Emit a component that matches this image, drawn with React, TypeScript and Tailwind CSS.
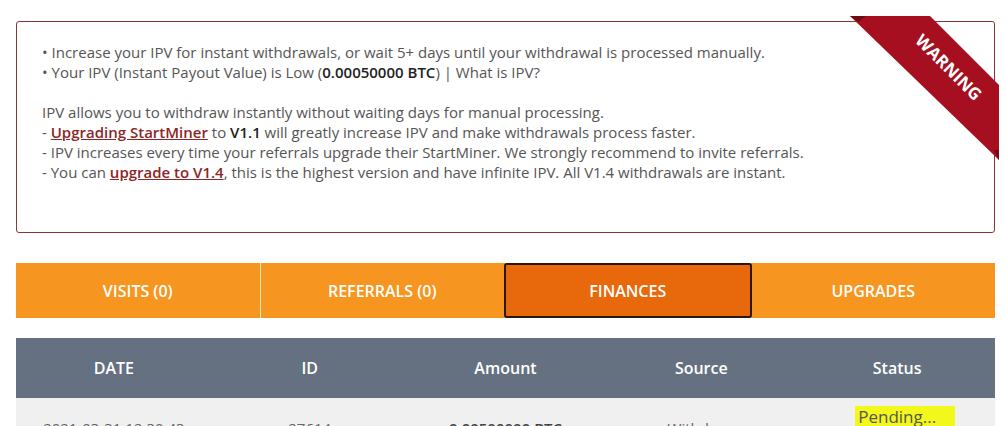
import React from "react";

const font = { fontFamily: '"Open Sans", "Noto Sans", sans-serif' };

function Ribbon() {
  return (
    <svg
      className="absolute left-[840px] top-[10px]"
      width="167"
      height="160"
      viewBox="840 10 167 160"
    >
      <polygon points="850,16 930,16 999,85 999,160" fill="#a50f1f" />
      <polygon points="850,16 866,16 858,22" fill="#6e0b14" />
      <polygon points="994,150 999,150 999,160" fill="#6e0b14" />
      <text
        x="949"
        y="67"
        fill="#ffffff"
        fontSize="17"
        fontWeight="700"
        textAnchor="middle"
        dominantBaseline="central"
        transform="rotate(45 949 67)"
        style={font}
      >
        WARNING
      </text>
    </svg>
  );
}

const tabs = [
  { label: "VISITS (0)", active: false },
  { label: "REFERRALS (0)", active: false },
  { label: "FINANCES", active: true },
  { label: "UPGRADES", active: false },
];

const cols = ["DATE", "ID", "Amount", "Source", "Status"];

export default function App() {
  return (
    <div className="relative h-[426px] w-[1007px] overflow-hidden bg-white" style={font}>
      <div className="ml-[16px] w-[979px] pt-[21px]">
        <div className="h-[212px] rounded-[3px] border border-[#8e3434] pl-[25px] pt-[20px] text-[15px] leading-[20px] text-[#555555]">
          <p>• Increase your IPV for instant withdrawals, or wait 5+ days until your withdrawal is processed manually.</p>
          <p>
            • Your IPV (Instant Payout Value) is Low (<b className="font-semibold text-[#222222]">0.00050000 BTC</b>) | What is IPV?
          </p>
          <p className="mt-[20px]">IPV allows you to withdraw instantly without waiting days for manual processing.</p>
          <p>
            - <span className="font-semibold text-[#8b2626] underline">Upgrading StartMiner</span> to{" "}
            <b className="font-semibold text-[#222222]">V1.1</b> will greatly increase IPV and make withdrawals process faster.
          </p>
          <p>- IPV increases every time your referrals upgrade their StartMiner. We strongly recommend to invite referrals.</p>
          <p>
            - You can <span className="font-semibold text-[#8b2626] underline">upgrade to V1.4</span>, this is the highest version and have infinite IPV. All V1.4 withdrawals are instant.
          </p>
        </div>

        <div className="mt-[30px] flex h-[55px] bg-[#f6951f]">
          {tabs.map((t, i) => (
            <div
              key={t.label}
              className={
                t.active
                  ? "flex flex-1 items-center justify-center rounded-[3px] border-2 border-[#2b1608] bg-[#e8690b] text-[16px] font-semibold text-white"
                  : i === 1
                  ? "flex flex-1 items-center justify-center border-l border-[#fde3b0] text-[16px] font-semibold text-white"
                  : "flex flex-1 items-center justify-center text-[16px] font-semibold text-white"
              }
            >
              {t.label}
            </div>
          ))}
        </div>

        <div className="mt-[20px]">
          <div className="grid h-[60px] grid-cols-5 bg-[#657180]">
            {cols.map((c) => (
              <div key={c} className="flex items-center justify-center text-[16px] font-semibold text-white">
                {c}
              </div>
            ))}
          </div>
          <div className="grid h-[60px] grid-cols-5 bg-[#f0f0f0] text-[15px] text-[#666666]">
            <div className="pt-[19px] text-center">2021-03-31 12:30:43</div>
            <div className="pt-[19px] text-center">27614</div>
            <div className="pt-[19px] text-center font-semibold text-[#444444]">0.00500000 BTC</div>
            <div className="pt-[19px] text-center">Withdraw</div>
            <div className="flex justify-start pl-[56px] pt-[8px]">
              <span className="bg-[#f3f81c] pl-[3px] pr-[19px] text-[17px] leading-[22px] text-[#555555]">Pending...</span>
            </div>
          </div>
        </div>
      </div>
      <Ribbon />
    </div>
  );
}
